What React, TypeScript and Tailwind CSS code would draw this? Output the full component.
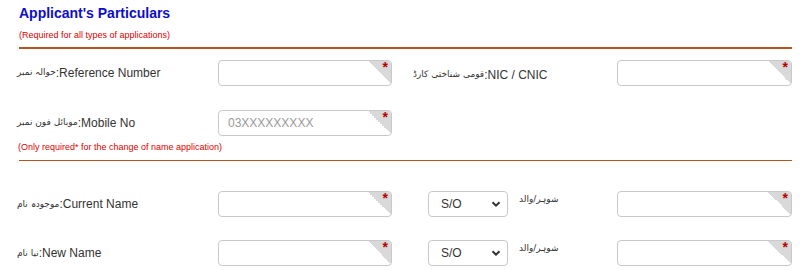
import React from "react";

const urduFont = { fontFamily: '"DejaVu Sans", "Noto Sans", sans-serif' };

function Label({ urdu, en }: { urdu: string; en: string }) {
  return (
    <div className="flex items-center text-[12px] text-[#333]">
      <span dir="rtl" className="text-[9px] leading-none" style={urduFont}>
        {urdu}
      </span>
      <span dir="ltr">:{en}</span>
    </div>
  );
}

function Field({ placeholder, w = "w-[174px]" }: { placeholder?: string; w?: string }) {
  return (
    <div className={`relative ${w} h-[26px] rounded-[4px] border border-[#c9c9c9] bg-white overflow-hidden`}>
      {placeholder ? (
        <span className="absolute left-[9px] top-1/2 -translate-y-1/2 text-[12px] text-[#999]">{placeholder}</span>
      ) : null}
      <div className="absolute right-0 top-0 w-[23px] h-[23px] bg-[linear-gradient(225deg,#d9d9d9_50%,transparent_50%)]" />
      <span className="absolute right-[3px] top-[-2px] text-[14px] font-bold text-[#b80000] leading-[16px]">*</span>
    </div>
  );
}

function Select() {
  return (
    <div className="flex items-center justify-between w-[80px] h-[26px] rounded-[4px] border border-[#c9c9c9] bg-white pl-[12px] pr-[6px] text-[12px] text-[#333]">
      <span>S/O</span>
      <svg width="10" height="10" viewBox="0 0 10 10">
        <path d="M1.5 3.2 L5 6.7 L8.5 3.2" fill="none" stroke="#333" strokeWidth="2" />
      </svg>
    </div>
  );
}

export default function App() {
  return (
    <div className="w-[804px] h-[270px] bg-white overflow-hidden pl-[17px]" style={{ fontFamily: '"Liberation Sans", Arial, sans-serif' }}>
      <div className="pl-[2px] pt-[4px] text-[14px] leading-[18px] font-bold text-[#0d0dcc]">Applicant's Particulars</div>
      <div className="pl-[2px] mt-[7px] text-[9px] leading-[12px] text-[#e00000]">(Required for all types of applications)</div>
      <div className="ml-[2px] mt-[6px] w-[773px] h-[1.5px] bg-[#b6541d]" />

      <div className="mt-[11px] flex items-center">
        <div className="w-[201px]"><Label urdu="حوالہ نمبر" en="Reference Number" /></div>
        <Field />
        <div className="w-[225px] pl-[21px] self-start pt-[6px]"><Label urdu="قومی شناختی کارڈ" en="NIC / CNIC" /></div>
        <Field w="w-[175px]" />
      </div>

      <div className="mt-[24px] flex items-center">
        <div className="w-[201px]"><Label urdu="موبائل فون نمبر" en="Mobile No" /></div>
        <Field placeholder="03XXXXXXXXX" />
      </div>
      <div className="pl-[1px] mt-[5px] text-[9px] leading-[12px] text-[#e00000]">(Only required* for the change of name application)</div>
      <div className="ml-[2px] mt-[7px] w-[773px] h-[1.5px] bg-[#b6541d]" />

      <div className="mt-[30px] flex items-center">
        <div className="w-[201px]"><Label urdu="موجودہ نام" en="Current Name" /></div>
        <Field />
        <div className="w-[225px] pl-[36px] flex items-start">
          <Select />
          <span dir="rtl" className="ml-[11px] mt-[2px] text-[9px] text-[#333]" style={urduFont}>شوہر/والد</span>
        </div>
        <Field w="w-[175px]" />
      </div>

      <div className="mt-[23px] flex items-center">
        <div className="w-[201px]"><Label urdu="نیا نام" en="New Name" /></div>
        <Field />
        <div className="w-[225px] pl-[36px] flex items-start">
          <Select />
          <span dir="rtl" className="ml-[11px] mt-[2px] text-[9px] text-[#333]" style={urduFont}>شوہر/والد</span>
        </div>
        <Field w="w-[175px]" />
      </div>
    </div>
  );
}
